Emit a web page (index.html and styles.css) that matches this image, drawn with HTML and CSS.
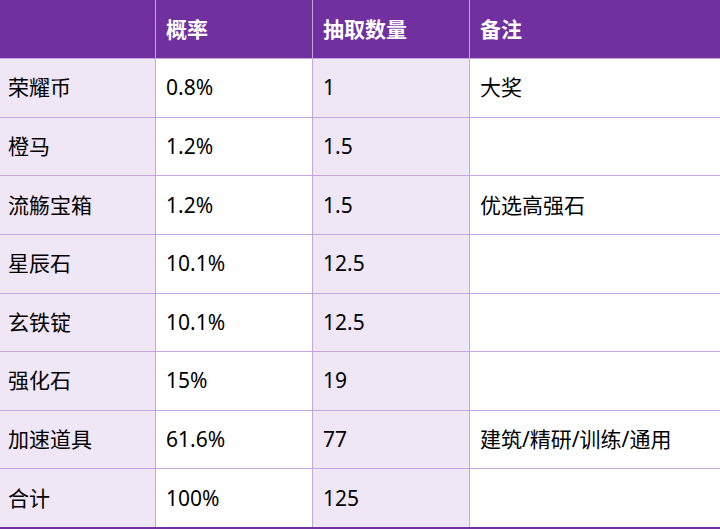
FILE: index.html
```html
<!DOCTYPE html>
<html lang="zh-CN">
<head>
<meta charset="utf-8">
<link rel="stylesheet" href="styles.css">
</head>
<body>
<div class="table">
  <div class="cell head"></div>
  <div class="cell head">概率</div>
  <div class="cell head">抽取数量</div>
  <div class="cell head">备注</div>

  <div class="cell tint first">荣耀币</div>
  <div class="cell">0.8%</div>
  <div class="cell tint">1</div>
  <div class="cell">大奖</div>

  <div class="cell tint first">橙马</div>
  <div class="cell">1.2%</div>
  <div class="cell tint">1.5</div>
  <div class="cell"></div>

  <div class="cell tint first">流觞宝箱</div>
  <div class="cell">1.2%</div>
  <div class="cell tint">1.5</div>
  <div class="cell">优选高强石</div>

  <div class="cell tint first">星辰石</div>
  <div class="cell">10.1%</div>
  <div class="cell tint">12.5</div>
  <div class="cell"></div>

  <div class="cell tint first">玄铁锭</div>
  <div class="cell">10.1%</div>
  <div class="cell tint">12.5</div>
  <div class="cell"></div>

  <div class="cell tint first">强化石</div>
  <div class="cell">15%</div>
  <div class="cell tint">19</div>
  <div class="cell"></div>

  <div class="cell tint first">加速道具</div>
  <div class="cell">61.6%</div>
  <div class="cell tint">77</div>
  <div class="cell">建筑/精研/训练/通用</div>

  <div class="cell tint first">合计</div>
  <div class="cell">100%</div>
  <div class="cell tint">125</div>
  <div class="cell"></div>
</div>
</body>
</html>
```

FILE: styles.css
```css
html, body {
  margin: 0;
  padding: 0;
  background: #ffffff;
}

.table {
  width: 720px;
  height: 527px;
  display: grid;
  grid-template-columns: 155px 156px 156px 1fr;
  grid-template-rows: 58px repeat(8, 1fr);
  gap: 1px;
  background: #c9a5e0;
  border-bottom: 2px solid #7030a0;
  font-family: "Noto Sans", "Noto Sans CJK SC", sans-serif;
  font-size: 21px;
  color: #000000;
}

.cell {
  background: #ffffff;
  display: flex;
  align-items: center;
  padding-left: 10px;
  line-height: 1;
  white-space: nowrap;
}

.cell.first {
  padding-left: 8px;
}

.cell.tint {
  background: #efe6f6;
}

.cell.head {
  background: #7030a0;
  color: #ffffff;
  font-weight: 700;
}
```
